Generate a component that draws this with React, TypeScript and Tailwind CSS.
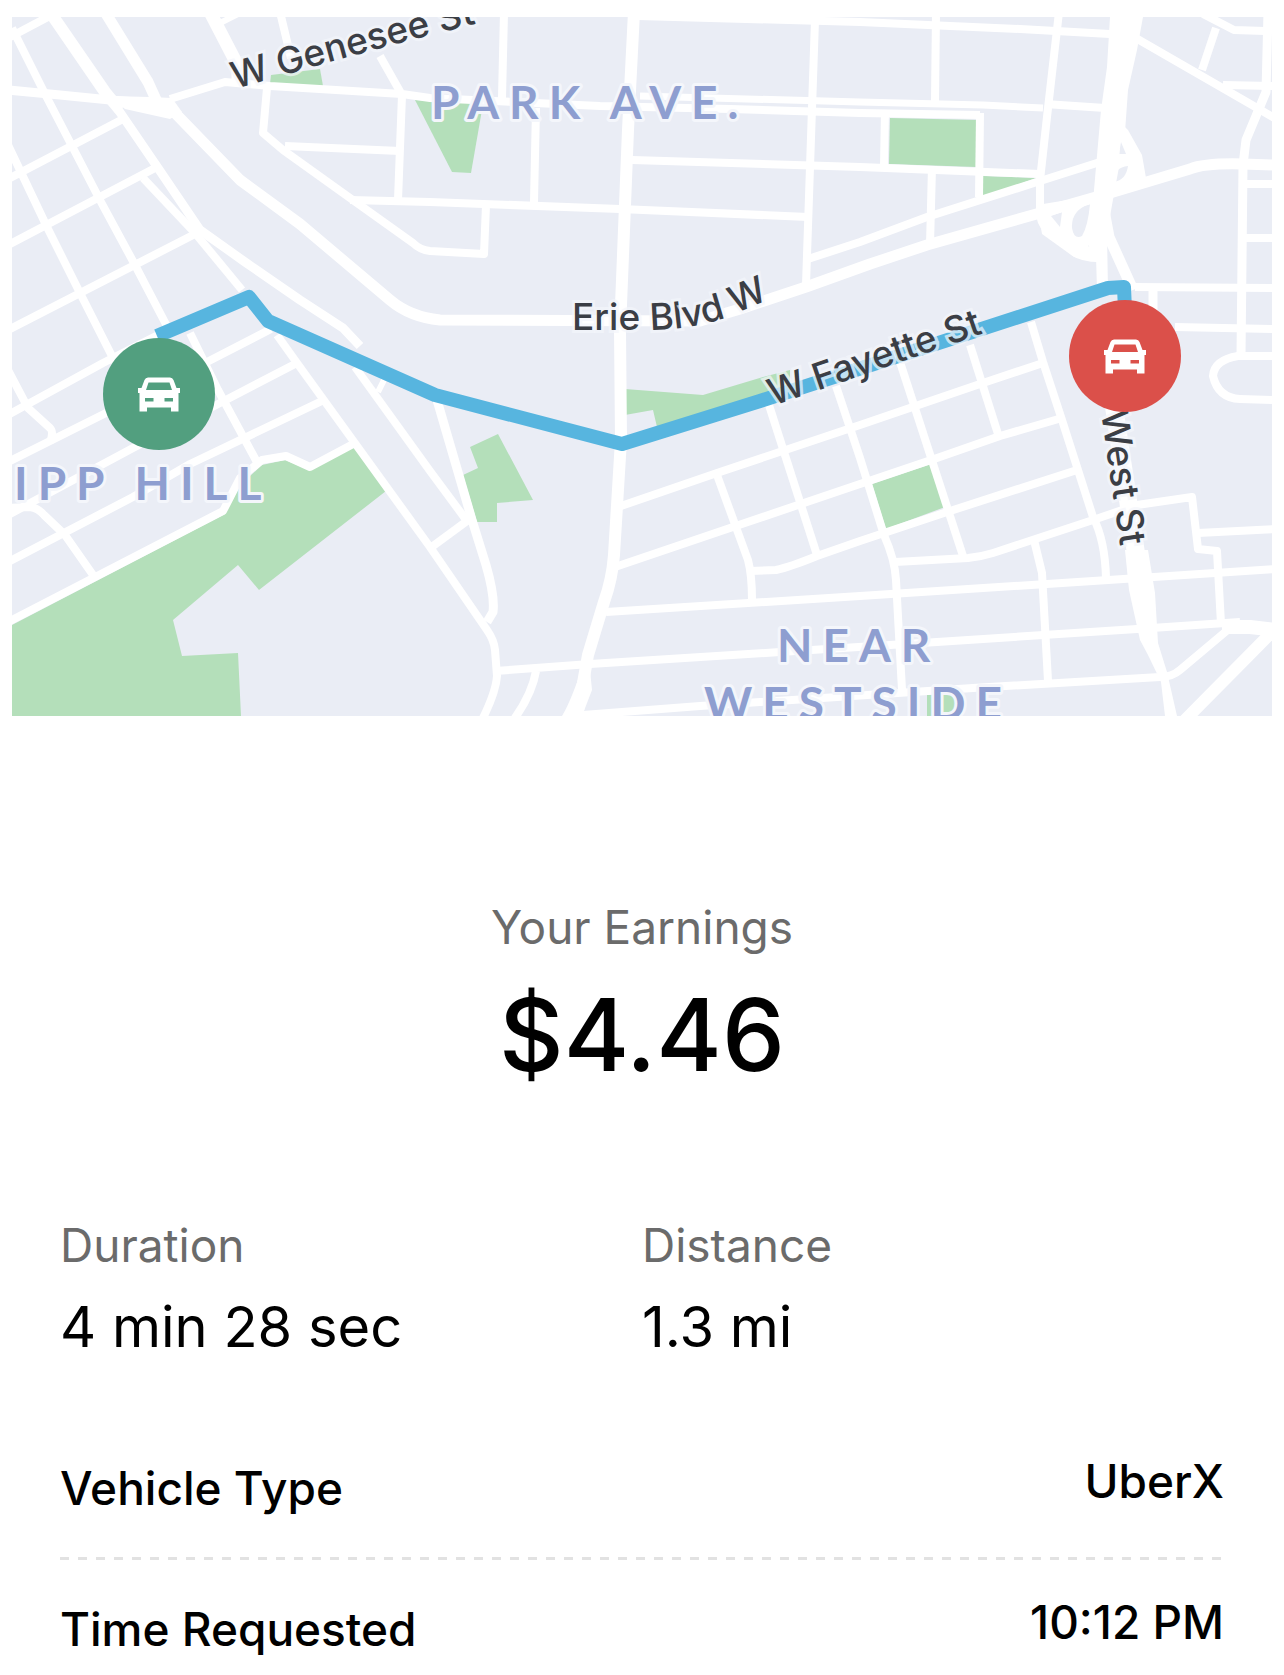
type Road = { d: string; w?: number };

const roads: Road[] = [
  // Tipp Hill grid
  { d: "M8 38 L48 17" },
  { d: "M12 28 L44 92 L72 146 L101 202 L135 265 L170 332" },
  { d: "M190 333 L218 390 L258 464" },
  { d: "M8 145 L47 227 L80 293 L115 362" },
  { d: "M8 179 L123 119" },
  { d: "M8 245 L157 167" },
  { d: "M8 330 L197 233" },
  { d: "M8 415 L103 363 L160 334" },
  { d: "M8 462 L110 411 L205 363 L271 329" },
  { d: "M8 515 L133 448 L220 403 L297 363" },
  { d: "M8 562 L133 497 L190 464 L324 400" },
  { d: "M8 622 L223 511 L240 478 L262 460 L286 456 L310 467 L355 443" },
  { d: "M8 370 L28 408 L50 428 Q54 432 50 442" },
  { d: "M8 508 L30 507 Q38 508 44 515 L65 535 L93 575" },
  { d: "M50 12 L105 92 L120 110", w: 12 },
  { d: "M115 105 L158 168 L200 230 L245 262 L300 300 L343 328 L360 346", w: 9 },
  { d: "M143 178 L195 233 L242 290" },
  { d: "M105 12 L148 82 L158 104", w: 11 },
  { d: "M8 90 L60 95 L110 100 L150 103", w: 9 },
  { d: "M170 99 L225 82 L270 86 L402 94 L430 98 L600 106 L730 109 L860 113 L980 115" },
  { d: "M277 335 L297 363 L430 547 L487 630 Q494 640 495 650 L497 676 Q496 692 482 720" },
  { d: "M355 367 L430 471 L467 521 L433 546" },
  { d: "M378 392 L384 380", w: 6 },
  { d: "M437 400 L472 520 L486 565 Q495 596 493 612 L487 622", w: 9 },
  { d: "M536 671 Q532 695 512 722" },
  // Park Ave. grid
  { d: "M210 12 L238 66 L238 82", w: 13 },
  { d: "M280 12 L291 58" },
  { d: "M218 24 L238 14", w: 6 },
  { d: "M380 56 L402 95 L398 200" },
  { d: "M267 88 L263 133 L283 150 L350 198 L413 243 Q420 250 430 251 L484 254 L486 205" },
  { d: "M285 146 L400 151" },
  { d: "M350 200 L430 202 L620 209 L808 217" },
  { d: "M504 12 L502 98" },
  { d: "M536 108 L534 202" },
  { d: "M634 12 L628 130 L620 330 L621 440 L614 555 Q612 580 604 602 L588 655 L576 722", w: 12 },
  { d: "M815 20 L810 167 L806 285" },
  { d: "M638 16 L860 22 L1020 29 L1110 34" },
  { d: "M640 96 L860 102 L983 105 L1043 108", w: 7 },
  { d: "M1045 104 L1105 108" },
  { d: "M632 160 L860 167 L1040 174" },
  { d: "M808 259 L860 242 L927 217 L1037 182 L1100 162" },
  { d: "M936 12 L935 102" },
  { d: "M885 110 L884 167" },
  { d: "M980 113 L979 197" },
  { d: "M932 167 L930 245" },
  { d: "M1059 12 L1047 117 L1040 180 L1040 215 Q1042 228 1054 236 L1074 252 Q1082 258 1100 258" },
  // Erie Blvd W
  {
    d: "M160 104 L175 113 L240 180 L300 224 L390 300 Q410 317 440 320 L700 321 L740 309 L806 287 L870 264 L927 245 L1040 213 L1110 193 L1190 169 Q1205 163 1243 164 L1276 165",
    w: 11,
  },
  // West St ramps
  { d: "M1103 205 L1109 237 L1133 290", w: 11 },
  { d: "M1113 400 L1137 560", w: 18 },
  { d: "M1134 37 L1252 105 L1276 119" },
  { d: "M1203 14 L1234 30 L1265 31" },
  { d: "M1216 28 L1202 70" },
  { d: "M1223 85 L1276 86" },
  { d: "M1268 12 L1266 92 L1246 140 L1243 165 L1241 356", w: 9 },
  { d: "M1243 184 L1276 184 M1243 238 L1276 238" },
  { d: "M1135 287 L1276 288 M1175 327 L1276 329" },
  { d: "M1153 288 L1153 310", w: 9 },
  { d: "M1276 356 L1238 356 Q1214 360 1213 376 Q1218 398 1240 399 L1276 400" },
  // Near Westside grid
  { d: "M1031 322 L1043 362 L1062 420 L1093 517 Q1105 540 1106 578" },
  { d: "M970 345 L998 434" },
  { d: "M900 362 L963 556" },
  { d: "M836 386 L860 458 L884 535 Q895 560 896 580 L902 690" },
  { d: "M768 402 L817 555" },
  { d: "M717 475 L748 560 Q752 575 752 600" },
  { d: "M618 507 L717 473 L860 425 L980 384 L1043 363" },
  { d: "M615 567 L730 528 L860 484 L937 458 L1000 436 L1062 418" },
  { d: "M750 571 L776 570 Q790 567 817 556 L860 541 L947 512 L1077 470" },
  { d: "M895 562 L968 558 Q980 557 993 553 L1093 520 L1137 505 L1192 497 L1198 549 L1217 551 L1221 624" },
  { d: "M1198 533 L1276 529" },
  { d: "M1034 540 L1042 573 L1048 681" },
  { d: "M606 612 L860 596 L1093 581 L1276 569" },
  { d: "M495 671 L590 664 L780 652 L937 642 L1137 629 L1240 622" },
  { d: "M570 716 L700 706 L973 688 L1160 677 Q1172 677 1180 670 L1230 628" },
  { d: "M1222 627 L1250 627 L1276 630", w: 14 },
  { d: "M1183 722 L1274 630", w: 12 },
];

// Junctions and stretches too uneven for a plain stroke
const junctions = [
  "M108 96 L150 97 L172 98 L182 112 L170 119 L125 109Z",
  "M1110 17 L1107 67 L1101 110 L1096 167 L1092 213 L1087 236 L1090 252 L1096 256 L1097 290 L1108 290 L1107 235 L1112 205 L1119 167 L1120 140 L1125 132 L1128 90 L1137 50 L1143 17Z",
  "M1037 205 L1098 195 L1097 262 L1074 257 L1042 234Z M1051 216 L1062 212 L1060 227Z M1090 204 Q1071 210 1072 228 Q1074 240 1082 236 Q1088 226 1090 204Z M1088 246 L1092 243 L1092 248Z",
  "M1118 120 L1128 130 L1142 155 L1146 178 L1108 195 L1110 150Z M1119 154 L1121 142 L1126 154Z M1128 166 Q1114 167 1114 182 Q1126 180 1128 166Z",
  "M1125 550 L1148 550 L1155 593 L1158 643 L1167 672 L1177 716 L1165 716 L1161 682 L1148 655 L1140 640 L1129 590Z",
  "M588 650 L592 690 L582 716 L562 716 Q572 700 588 650Z",
];

const parks = [
  "M12 625 L225 514 L235 490 L262 465 L285 460 L309 470 L354 447 L386 491 L259 590 L238 565 L173 620 L182 656 L238 653 L241 716 L12 716Z",
  "M271 75 L320 69 L323 86 L270 84Z",
  "M415 100 L483 104 L471 173 L452 172Z",
  "M890 118 L977 120 L976 167 L889 164Z",
  "M983 176 L1036 178 L983 197Z",
  "M625 389 L703 395 L763 377 L790 370 L790 390 L657 427 L653 410 L625 415Z",
  "M470 447 L498 434 L533 500 L497 503 L497 522 L477 522 L463 475 L478 468Z",
  "M872 484 L931 464 L945 507 L886 529Z",
  "M927 695 L950 694 Q962 705 960 716 L927 716Z",
];

const streets = [
  { id: "genesee", name: "W Genesee St", d: "M235 89 L330 62 L400 43 L520 12" },
  { id: "erie", name: "Erie Blvd W", d: "M572 330 L650 330 Q700 329 732 315 L800 286" },
  { id: "fayette", name: "W Fayette St", d: "M773 406 L1010 324" },
  { id: "west", name: "West St", d: "M1101 412 L1124 572" },
];

const areas = [
  { name: "PARK AVE.", x: 431, y: 119 },
  { name: "IPP HILL", x: 14, y: 500 },
  { name: "NEAR", x: 777, y: 662 },
  { name: "WESTSIDE", x: 704, y: 720 },
];

const details = [
  { label: "Vehicle Type", value: "UberX" },
  { label: "Time Requested", value: "10:12 PM" },
];

function Marker({ x, y, className }: { x: number; y: number; className: string }) {
  return (
    <g transform={`translate(${x} ${y})`}>
      <circle r="56" className={className} />
      <path
        fill="#fff"
        fillRule="evenodd"
        d="M-14.5 -14 Q-13.5 -16.5 -11 -16.5 H11 Q13.5 -16.5 14.5 -14 L17.5 -6 H21 V-1 H19.5 V17.5 H12 V13.5 H-12 V17.5 H-19.5 V-1 H-21 V-6 H-17.5Z M-10.5 -11.5 L-13 -4 H13 L10.5 -11.5Z M-14 4 H-5.5 V7.5 H-14Z M5.5 4 H14 V7.5 H5.5Z"
      />
    </g>
  );
}

function TripMap() {
  return (
    <svg
      viewBox="12 17 1260 699"
      role="img"
      aria-label="Trip route"
      className="block w-full bg-[#eaedf5]"
    >
      {parks.map((d) => (
        <path key={d} d={d} fill="#b4dfba" />
      ))}
      <g fill="none" stroke="#fff" strokeLinejoin="round">
        {roads.map((road) => (
          <path key={road.d} d={road.d} strokeWidth={road.w ?? 8} />
        ))}
      </g>
      {junctions.map((d) => (
        <path key={d} d={d} fill="#fff" fillRule="evenodd" />
      ))}
      <path
        d="M157 336 L249 297 L268 321 L435 395 L622 444 L760 401 L1108 288 L1124 287 L1125 310"
        fill="none"
        stroke="#57b5df"
        strokeWidth="14"
        strokeLinejoin="round"
      />
      <g
        className="fill-[#3b3e45] font-['Inter'] text-[37px] font-medium"
        stroke="#f4f6fb"
        strokeOpacity="0.7"
        strokeWidth="6"
        paintOrder="stroke"
      >
        {streets.map((street) => (
          <g key={street.id}>
            <path id={street.id} d={street.d} fill="none" stroke="none" />
            <text>
              <textPath href={`#${street.id}`}>{street.name}</textPath>
            </text>
          </g>
        ))}
      </g>
      <g
        className="fill-[#8e9ed0] font-['Lato'] text-[46px] font-bold tracking-[10px]"
        stroke="#f4f6fb"
        strokeWidth="6"
        strokeLinejoin="round"
        paintOrder="stroke"
      >
        {areas.map((area) => (
          <text key={area.name} x={area.x} y={area.y}>
            {area.name}
          </text>
        ))}
      </g>
      <Marker x={159} y={394} className="fill-[#529f7f]" />
      <Marker x={1125} y={356} className="fill-[#db504a]" />
    </svg>
  );
}

function Stat({ label, value }: { label: string; value: string }) {
  return (
    <div className="flex flex-col gap-4">
      <dt className="text-[46px] leading-[56px] text-[#6b6b6b]">{label}</dt>
      <dd className="text-[56px] leading-[76px]">{value}</dd>
    </div>
  );
}

export default function App() {
  return (
    <main className="bg-white pt-[17px] font-['Inter',sans-serif] text-black">
      <div className="px-3">
        <TripMap />
      </div>

      <section className="flex flex-col items-center pt-[183px] text-center">
        <h1 className="text-[46px] leading-[56px] text-[#6b6b6b]">Your Earnings</h1>
        <p className="pt-4 text-[100px] leading-[128px] font-medium">$4.46</p>
      </section>

      <dl className="grid grid-cols-2 px-[60px] pt-[118px]">
        <Stat label="Duration" value="4 min 28 sec" />
        <Stat label="Distance" value="1.3 mi" />
      </dl>

      <dl className="px-[60px] pt-[54px]">
        {details.map((row, i) => (
          <div key={row.label}>
            {i > 0 && (
              <div className="h-[3px] bg-[repeating-linear-gradient(90deg,#e2e2e2_0_9px,transparent_9px_18px)]" />
            )}
            <div className="flex items-start justify-between text-[46px] leading-[56px] font-medium">
              <dt className="py-[41px]">{row.label}</dt>
              <dd className="pt-[34px]">{row.value}</dd>
            </div>
          </div>
        ))}
      </dl>
    </main>
  );
}
